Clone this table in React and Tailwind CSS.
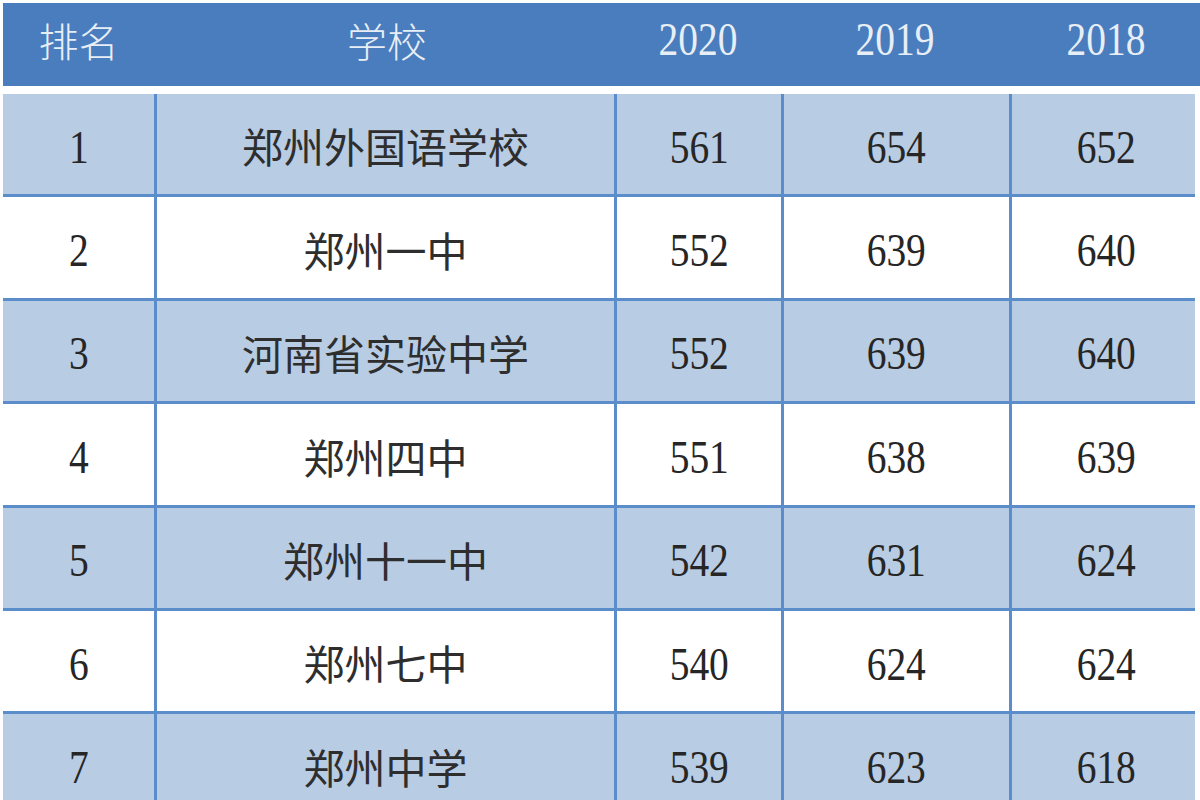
import React from "react";

const rows = [
  ["1", "郑州外国语学校", "561", "654", "652", true],
  ["2", "郑州一中", "552", "639", "640", false],
  ["3", "河南省实验中学", "552", "639", "640", true],
  ["4", "郑州四中", "551", "638", "639", false],
  ["5", "郑州十一中", "542", "631", "624", true],
  ["6", "郑州七中", "540", "624", "624", false],
  ["7", "郑州中学", "539", "623", "618", true],
];

const cjk = { fontFamily: '"Noto Sans CJK SC", "Noto Sans", sans-serif' };
const serif = { fontFamily: '"Liberation Serif", "DejaVu Serif", serif' };

function Num({ children, light }) {
  return (
    <span
      className={`inline-block scale-x-[0.84] text-[47px] leading-none ${light ? "text-[#e8eef6]" : "text-[#262626]"}`}
      style={serif}
    >
      {children}
    </span>
  );
}

export default function App() {
  return (
    <div className="w-[1200px] h-[800px] overflow-hidden bg-white pt-[3px] pl-[3px]">
      {/* header */}
      <div className="flex h-[83px] w-[1197px] bg-[#4a7dbd] pb-[10px]">
        <div className="w-[151px] flex items-center justify-center text-[40px] font-light text-[#e8eef6]" style={cjk}>排名</div>
        <div className="w-[460px] flex items-center justify-center pl-[6px] text-[40px] font-light text-[#e8eef6]" style={cjk}>学校</div>
        <div className="w-[167px] flex items-center justify-center"><Num light>2020</Num></div>
        <div className="w-[228px] flex items-center justify-center"><Num light>2019</Num></div>
        <div className="w-[186px] flex items-center justify-center pl-[8px]"><Num light>2018</Num></div>
      </div>
      <div className="h-[8px]" />
      {/* body */}
      <div className="flex flex-col w-[1192px]">
        {rows.map(([rank, name, a, b, c, shaded]) => (
          <div
            key={rank}
            className={`flex h-[103.4px] shrink-0 border-b-[3px] border-[#5b8dcb] ${shaded ? "bg-[#b8cce4]" : "bg-white"}`}
          >
            <div className="w-[151px] flex items-center justify-center pt-[6px]"><Num>{rank}</Num></div>
            <div className="w-[460px] border-l-[3px] border-[#5b8dcb] flex items-center justify-center pt-[4px] text-[41px] text-[#2e2e2e]" style={cjk}>{name}</div>
            <div className="w-[167px] border-l-[3px] border-[#5b8dcb] flex items-center justify-center pt-[6px]"><Num>{a}</Num></div>
            <div className="w-[228px] border-l-[3px] border-[#5b8dcb] flex items-center justify-center pt-[6px]"><Num>{b}</Num></div>
            <div className="w-[186px] border-l-[3px] border-[#5b8dcb] flex items-center justify-center pt-[6px] pl-[6px]"><Num>{c}</Num></div>
          </div>
        ))}
      </div>
    </div>
  );
}
